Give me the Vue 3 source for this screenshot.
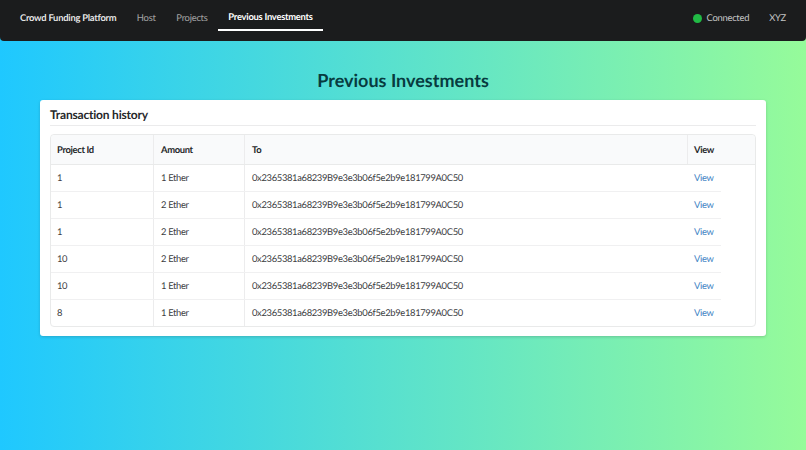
<script setup>
const wallet = '0x2365381a68239B9e3e3b06f5e2b9e181799A0C50'

const rows = [
  { id: 1, project: '1', amount: '1 Ether' },
  { id: 2, project: '1', amount: '2 Ether' },
  { id: 3, project: '1', amount: '2 Ether' },
  { id: 4, project: '10', amount: '2 Ether' },
  { id: 5, project: '10', amount: '1 Ether' },
  { id: 6, project: '8', amount: '1 Ether' },
]
</script>

<template>
  <div class="page">
    <nav class="navbar">
      <a class="item brand">Crowd Funding Platform</a>
      <a class="item">Host</a>
      <a class="item">Projects</a>
      <a class="item active">Previous Investments</a>
      <div class="right">
        <span class="dot"></span>
        <span class="status">Connected</span>
        <span class="user">XYZ</span>
      </div>
    </nav>

    <h1 class="title">Previous Investments</h1>

    <section class="card">
      <h2 class="card-title">Transaction history</h2>
      <div class="table">
        <div class="row head">
          <div class="cell">Project Id</div>
          <div class="cell">Amount</div>
          <div class="cell">To</div>
          <div class="cell last">View</div>
        </div>
        <div v-for="row in rows" :key="row.id" class="row body">
          <div class="cell">{{ row.project }}</div>
          <div class="cell">{{ row.amount }}</div>
          <div class="cell address">{{ wallet }}</div>
          <div class="cell last"><a class="link">View</a></div>
        </div>
      </div>
    </section>
  </div>
</template>

<style scoped>
.page {
  height: 450px;
  overflow: hidden;
  font-family: Lato, 'Open Sans', sans-serif;
  text-rendering: geometricPrecision;
  background: linear-gradient(90deg, #1fc8ff 0%, #96fb9a 100%);
}

.navbar {
  display: flex;
  align-items: stretch;
  height: 41px;
  box-sizing: border-box;
  padding: 0 20px 10px 10px;
  background: #1b1c1d;
  border-radius: 0 0 4px 4px;
}
.item {
  display: flex;
  align-items: center;
  padding: 6px 10px 0;
  color: rgba(255, 255, 255, 0.6);
  font-size: 9.4px;
  letter-spacing: -0.25px;
}
.item + .item {
  padding: 6px 10.4px 0;
}
.brand {
  color: rgba(255, 255, 255, 0.9);
  font-weight: 700;
}
.active {
  color: #fff;
  font-weight: 700;
  border-bottom: 2px solid #fff;
}
.right {
  display: flex;
  align-items: center;
  margin-left: auto;
  padding-top: 6px;
  color: rgba(255, 255, 255, 0.75);
  font-size: 9.4px;
  letter-spacing: -0.25px;
}
.dot {
  width: 9px;
  height: 9px;
  margin-right: 4px;
  border-radius: 50%;
  background: #21ba45;
}
.user {
  margin-left: 20px;
}

.title {
  margin: 28px 0 8px;
  text-align: center;
  font-size: 18px;
  line-height: 23px;
  font-weight: 700;
  color: #073b3f;
}

.card {
  box-sizing: border-box;
  width: 726px;
  height: 236px;
  margin-left: 40px;
  padding: 7px 10px;
  background: #fff;
  border-radius: 3px;
  box-shadow: 0 1px 3px rgba(34, 36, 38, 0.2);
}
.card-title {
  margin: 0 0 8px;
  padding-bottom: 3px;
  border-bottom: 1px solid #ebebec;
  font-size: 12px;
  line-height: 15px;
  font-weight: 700;
  letter-spacing: -0.2px;
  color: #26282a;
}

.table {
  box-sizing: border-box;
  height: 193px;
  border: 1px solid #e9eaea;
  border-radius: 4px;
  font-size: 9.4px;
  letter-spacing: -0.33px;
  color: #3c3d3f;
}
.row {
  display: grid;
  grid-template-columns: 103px 91px 443px 68px;
}
.row.head {
  height: 29px;
  background: #f9fafb;
  border-bottom: 1px solid #e9eaea;
  border-radius: 4px 4px 0 0;
  font-weight: 700;
  color: #26282a;
}
.row.head .cell {
  padding-top: 1px;
}
.row.body {
  grid-template-columns: 103px 91px 443px 33px;
  width: 670px;
  height: 27px;
  box-sizing: border-box;
  border-bottom: 1px solid #f0f0f1;
}
.row.body:last-child {
  border-bottom-color: transparent;
}
.row.body .address {
  border-right: 0;
}
.cell {
  display: flex;
  align-items: center;
  padding-left: 7px;
  border-right: 1px solid #ececed;
  white-space: nowrap;
}
.cell:first-child {
  padding-left: 6px;
}
.cell.last {
  padding-left: 6px;
  border-right: 0;
}
.link {
  color: #4183c4;
}
</style>
